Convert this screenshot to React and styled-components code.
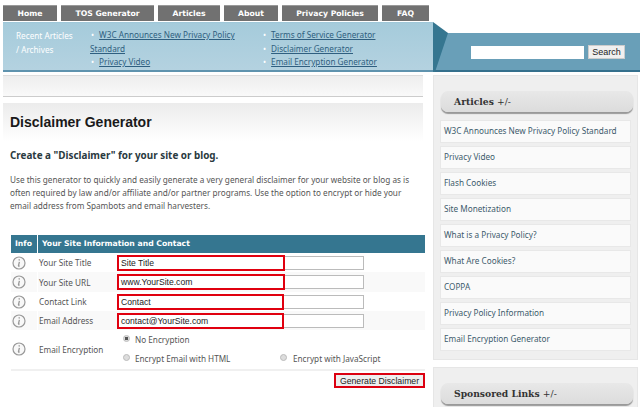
import React from "react";
import styled, { createGlobalStyle } from "styled-components";

const Global = createGlobalStyle`
  html, body { margin: 0; padding: 0; background: #fff; width: 640px; height: 407px; overflow: hidden; }
  body { font-family: "Noto Sans", "Liberation Sans", sans-serif; font-size: 8.2px; color: #444; }
  * { box-sizing: border-box; }
`;

const Page = styled.div`
  width: 640px;
  height: 407px;
  overflow: hidden;
  background: #fff;
  padding-top: 5px;
`;
const Nav = styled.nav`
  display: flex;
  gap: 4px;
  padding-left: 3px;
  height: 17px;
`;
const Tab = styled.a`
  width: ${(p) => p.$w}px;
  height: 16px;
  background: #717171;
  border-top: 1px solid #999;
  color: #fff;
  font: bold 7.7px/15px "DejaVu Sans", sans-serif;
  text-align: center;
`;
const Header = styled.header`
  display: flex;
  height: 50px;
`;
const Links = styled.div`
  width: 430px;
  margin-left: 3px;
  height: 50px;
  display: flex;
  background: linear-gradient(#a5cbdb, #b4d2e0);
  border-bottom: 2px solid #5f93ae;
  border-top: 1px solid #9fc7d8;
`;
const Recent = styled.div`
  width: 87px;
  padding: 6px 0 0 13px;
  color: #fff;
  line-height: 14px;
`;
const LinkCol = styled.div`
  width: ${(p) => p.$w}px;
  line-height: 13.5px;
  padding-top: 5px;
  color: #fff;
`;
const HeadLink = styled.a`
  color: #2f5f80;
  text-decoration: underline;
`;
const Dot = styled.span`
  margin: 0 5px 0 1px;
`;
const SearchBand = styled.div`
  position: relative;
  flex: 1;
  margin-top: 11px;
  height: 39px;
  background: #699fb8;
  border-bottom: 2px solid #35708d;
  display: flex;
  align-items: center;
  padding: 0 0 0 38px;
  gap: 4px;
`;
const Fold = styled.svg`
  position: absolute;
  left: 0;
  top: -11px;
`;
const SearchInput = styled.div`
  width: 113px;
  height: 13px;
  background: #fff;
  margin-top: 1px;
`;
const SearchBtn = styled.button`
  width: 37px;
  height: 14px;
  margin: 1px 0 0 0;
  padding: 0;
  border: 1px solid #ccc;
  background: #f0f0f0;
  font: 9px "Liberation Sans", sans-serif;
  color: #222;
`;
const Body = styled.div`
  display: flex;
  margin-top: 3px;
`;
const Main = styled.main`
  width: 420px;
  margin-left: 3px;
`;
const Strip = styled.div`
  height: 22px;
  background: linear-gradient(#eee, #f9f9f9);
  border-top: 1px solid #ddd;
  border-bottom: 1px solid #ccc;
`;
const Title = styled.div`
  margin-top: 6px;
  height: 38px;
  background: linear-gradient(#ececec, #fff);
  padding: 10px 0 0 7px;
  font: bold 14px/18px "Liberation Sans", sans-serif;
  color: #1a1a1a;
`;
const Sub = styled.h2`
  margin: 7px 0 0 7px;
  font: bold 9.9px/14px "Noto Sans", sans-serif;
  color: #2a3a40;
`;
const Para = styled.p`
  margin: 11px 0 0 7px;
  width: 412px;
  line-height: 13px;
  color: #555;
`;
const Table = styled.div`
  margin: 23px 0 0 8px;
  width: 414px;
`;
const Head = styled.div`
  display: grid;
  grid-template-columns: 26px 1fr;
  gap: 1px;
  height: 18px;
  font: bold 7.7px/17px "DejaVu Sans", sans-serif;
  color: #fff;
`;
const HeadCell = styled.div`
  background: #357690;
  padding-left: ${(p) => p.$pad}px;
`;
const Row = styled.div`
  display: grid;
  grid-template-columns: 26px 1fr;
  gap: 1px;
  height: ${(p) => p.$h}px;
  align-items: stretch;
`;
const InfoCell = styled.div`
  background: ${(p) => (p.$alt ? "#f9f9f9" : "#fff")};
  display: flex;
  align-items: center;
  padding-left: 1px;
`;
const FieldCell = styled.div`
  background: ${(p) => (p.$alt ? "#f9f9f9" : "#fff")};
  display: flex;
  align-items: center;
`;
const Label = styled.div`
  width: 80px;
  padding-left: 1px;
  color: #555;
`;
const InputBox = styled.div`
  position: relative;
  width: 246px;
  height: 14px;
  border: 1px solid #bbb;
  background: #fff;
  font: 8.6px/12px "Liberation Sans", sans-serif;
  color: #222;
  padding-left: 2px;
`;
const RedBox = styled.div`
  position: absolute;
  left: -2px;
  top: -2px;
  width: ${(p) => p.$w}px;
  height: 16px;
  border: 2px solid #e0000f;
`;
const RadioArea = styled.div`
  display: flex;
  flex-direction: column;
  gap: 5px;
  color: #555;
`;
const RadioRow = styled.div`
  display: flex;
  align-items: center;
  height: 14px;
`;
const Radio = styled.span`
  width: 7px;
  height: 7px;
  border-radius: 50%;
  background: ${(p) => (p.$on ? "radial-gradient(#555 40%, #ddd 50%)" : "#ddd")};
  border: 1px solid #bbb;
  margin: 0 ${(p) => p.$gap || 5}px 2px 5px;
`;
const RadioText = styled.span`
  width: ${(p) => p.$w || "auto"};
`;
const Rule = styled.div`
  height: 2px;
  background: #f0f0f0;
  margin-top: 1px;
`;
const SubmitRow = styled.div`
  display: flex;
  justify-content: flex-end;
  margin-top: 2px;
`;
const Submit = styled.button`
  width: 91px;
  height: 15px;
  padding: 0;
  border: 2px solid #dc0010;
  background: #eee;
  font: 8.7px/10px "Liberation Sans", sans-serif;
  color: #222;
`;
const Side = styled.aside`
  width: 205px;
  margin-left: 10px;
`;
const SideBox = styled.section`
  background: #efefef;
  border: 1px solid #e6e6e6;
  padding: 15px 6px 5px 6px;
  margin-bottom: 7px;
`;
const SideHead = styled.div`
  height: 21px;
  width: 192px;
  margin-left: 1px;
  border-radius: 7px;
  background: linear-gradient(#e8e8e8, #dcdcdc);
  box-shadow: 0 2px 1px #999;
  font: bold 9.2px/21px "DejaVu Serif", "Liberation Serif", serif;
  color: #333;
  padding-left: 13px;
  margin-bottom: 8px;
`;
const Toggle = styled.span`
  font-weight: normal;
`;
const SideItem = styled.a`
  display: block;
  height: 23px;
  margin-bottom: 3px;
  background: #fafafa;
  border: 1px solid #e8e8e8;
  padding-left: 3px;
  line-height: 20px;
  color: #3d5a6c;
`;

const Info = () => (
  <svg width="14" height="14" viewBox="0 0 14 14" fill="none">
    <circle cx="7" cy="7" r="6" stroke="#999" strokeWidth="1.2" fill="#f8f8f8" />
    <path d="M7.8 3.6 L6.6 4.2 M7.4 5.8 L6.4 10 M6 10.2 L7.6 10" stroke="#999" strokeWidth="1.3" />
  </svg>
);

const tabs = [["Home", 54], ["TOS Generator", 93], ["Articles", 62], ["About", 54], ["Privacy Policies", 96], ["FAQ", 47]];
const sideItems = ["W3C Announces New Privacy Policy Standard", "Privacy Video", "Flash Cookies", "Site Monetization", "What is a Privacy Policy?", "What Are Cookies?", "COPPA", "Privacy Policy Information", "Email Encryption Generator"];
const fields = [
  ["Your Site Title", "Site Title", 168, false, 19],
  ["Your Site URL", "www.YourSite.com", 168, true, 20],
  ["Contact Link", "Contact", 167, false, 19],
  ["Email Address", "contact@YourSite.com", 167, true, 19],
];

export default function App() {
  return (
    <Page>
      <Global />
      <Nav>{tabs.map(([t, w]) => <Tab key={t} $w={w}>{t}</Tab>)}</Nav>
      <Header>
        <Links>
          <Recent>Recent Articles<br />/ Archives</Recent>
          <LinkCol $w={172}>
            <Dot>•</Dot><HeadLink>W3C Announces New Privacy Policy</HeadLink><br />
            <HeadLink>Standard</HeadLink><br />
            <Dot>•</Dot><HeadLink>Privacy Video</HeadLink>
          </LinkCol>
          <LinkCol $w={170}>
            <Dot>•</Dot><HeadLink>Terms of Service Generator</HeadLink><br />
            <Dot>•</Dot><HeadLink>Disclaimer Generator</HeadLink><br />
            <Dot>•</Dot><HeadLink>Email Encryption Generator</HeadLink>
          </LinkCol>
        </Links>
        <SearchBand>
          <Fold width="16" height="50" viewBox="0 0 16 50"><path d="M0 0 L15 11 L2 50 L0 50 Z" fill="#357690" /></Fold>
          <SearchInput />
          <SearchBtn>Search</SearchBtn>
        </SearchBand>
      </Header>
      <Body>
        <Main>
          <Strip />
          <Title>Disclaimer Generator</Title>
          <Sub>Create a "Disclaimer" for your site or blog.</Sub>
          <Para>Use this generator to quickly and easily generate a very general disclaimer for your website or blog as is often required by law and/or affiliate and/or partner programs. Use the option to encrypt or hide your email address from Spambots and email harvesters.</Para>
          <Table>
            <Head><HeadCell $pad={4}>Info</HeadCell><HeadCell $pad={4}>Your Site Information and Contact</HeadCell></Head>
            {fields.map(([l, v, w, alt, h]) => (
              <Row key={l} $h={h}>
                <InfoCell $alt={alt}><Info /></InfoCell>
                <FieldCell $alt={alt}>
                  <Label>{l}</Label>
                  <InputBox>{v}<RedBox $w={w} /></InputBox>
                </FieldCell>
              </Row>
            ))}
            <Row $h={38}>
              <InfoCell><Info /></InfoCell>
              <FieldCell>
                <Label>Email Encryption</Label>
                <RadioArea>
                  <RadioRow><Radio $on /><RadioText>No Encryption</RadioText></RadioRow>
                  <RadioRow><Radio /><RadioText $w="140px">Encrypt Email with HTML</RadioText><Radio $gap={6} /><RadioText>Encrypt with JavaScript</RadioText></RadioRow>
                </RadioArea>
              </FieldCell>
            </Row>
            <Rule />
            <SubmitRow><Submit>Generate Disclaimer</Submit></SubmitRow>
          </Table>
        </Main>
        <Side>
          <SideBox>
            <SideHead>Articles <Toggle>+/-</Toggle></SideHead>
            {sideItems.map((s) => <SideItem key={s}>{s}</SideItem>)}
          </SideBox>
          <SideBox>
            <SideHead>Sponsored Links <Toggle>+/-</Toggle></SideHead>
          </SideBox>
        </Side>
      </Body>
    </Page>
  );
}
